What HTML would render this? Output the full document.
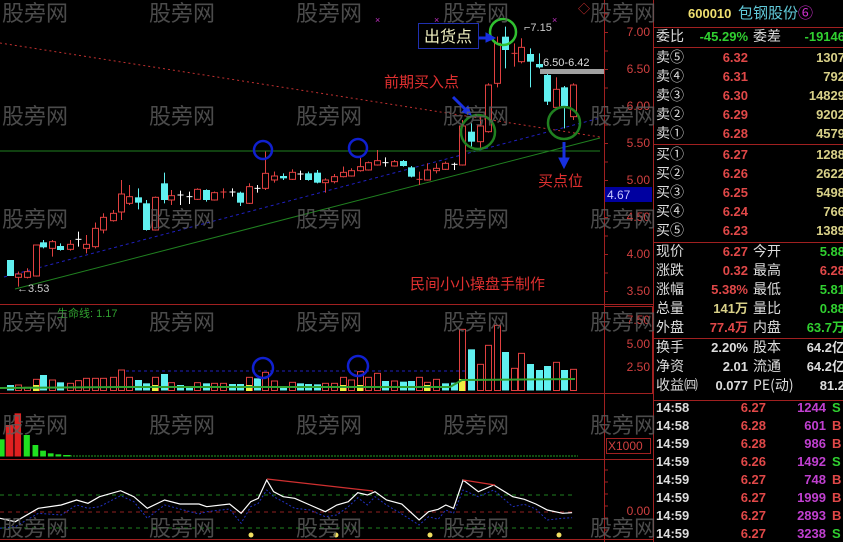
<!DOCTYPE html>
<html><head><meta charset="utf-8">
<style>
html,body{margin:0;padding:0;background:#000;width:843px;height:542px;overflow:hidden}
body{position:relative;font-family:"Liberation Sans","Noto Sans CJK SC",sans-serif}
svg{position:absolute;left:0;top:0}
.p{position:absolute;font-size:13px;line-height:19px;white-space:nowrap}
.l{color:#ddd;font-family:"Noto Sans CJK SC",sans-serif;font-size:14px}
.w{color:#ddd;font-weight:bold}
.m{color:#c040d0;font-weight:bold;text-align:right}
</style></head><body>
<svg id="s" width="843" height="542" xmlns="http://www.w3.org/2000/svg" font-family="Liberation Sans, Noto Sans CJK SC, sans-serif">
<g stroke="#a02020" stroke-width="1" fill="none">
<line x1="0" y1="304.5" x2="653" y2="304.5"/>
<line x1="0" y1="393.5" x2="653" y2="393.5"/>
<line x1="0" y1="459.5" x2="653" y2="459.5"/>
<line x1="0" y1="539.5" x2="653" y2="539.5"/>
<line x1="604.5" y1="0" x2="604.5" y2="542"/>
<line x1="653.5" y1="0" x2="653.5" y2="542"/>
<rect x="604.5" y="306.5" width="48" height="87"/>
<line x1="653" y1="27.5" x2="843" y2="27.5"/>
<line x1="653" y1="47.5" x2="843" y2="47.5"/>
<line x1="653" y1="144.5" x2="843" y2="144.5"/>
<line x1="653" y1="242.5" x2="843" y2="242.5"/>
<line x1="653" y1="338.5" x2="843" y2="338.5"/>
<line x1="653" y1="400.5" x2="843" y2="400.5"/>
</g>
<g id="ticks" stroke="#a02020"></g>
<g fill="#d04040" font-size="12" text-anchor="end">
<text x="650" y="36">7.00</text><text x="650" y="73">6.50</text><text x="650" y="110">6.00</text>
<text x="650" y="147">5.50</text><text x="650" y="184">5.00</text><text x="650" y="221">4.50</text>
<text x="650" y="258">4.00</text><text x="650" y="295">3.50</text>
<text x="650" y="324">7.50</text><text x="650" y="348">5.00</text><text x="650" y="371">2.50</text>
<text x="650" y="515">0.00</text>
</g>
<rect x="605" y="187" width="47" height="15" fill="#0000a0"/>
<text x="607" y="199" fill="#c8c8ff" font-size="12">4.67</text>
<rect x="606.5" y="438.5" width="44" height="15" fill="none" stroke="#a02020"/>
<text x="608" y="450" fill="#d04040" font-size="12">X1000</text>
<line x1="0" y1="43" x2="600" y2="137" stroke="#c03030" stroke-dasharray="2,3"/>
<line x1="4" y1="277" x2="600" y2="118" stroke="#2020c0" stroke-dasharray="3,3"/>
<line x1="15" y1="289" x2="600" y2="138" stroke="#208020"/>
<line x1="0" y1="151" x2="600" y2="151" stroke="#208020"/>
<line x1="126" y1="371" x2="465" y2="371" stroke="#2020c0" stroke-dasharray="3,3"/>
<g id="c"></g>
<g id="v"></g>
<polyline points="0,388 120,387 450,387 462,380 575,379" fill="none" stroke="#30a030" stroke-width="2"/>
<g id="b"></g>
<line x1="70" y1="456" x2="578" y2="456" stroke="#20a020" stroke-dasharray="2,1"/>
<g stroke-dasharray="4,4" stroke-width="1">
<line x1="0" y1="495" x2="576" y2="495" stroke="#208020"/>
<line x1="0" y1="528" x2="576" y2="528" stroke="#208020"/>
<line x1="0" y1="512" x2="576" y2="512" stroke="#902020"/>
</g>
<polyline id="bl" fill="none" stroke="#2030c0" stroke-dasharray="2,2"/>
<polyline id="wl" fill="none" stroke="#fff" stroke-width="1.2"/>
<line x1="267" y1="479" x2="373" y2="491" stroke="#d03030" stroke-width="1.2"/>
<line x1="463" y1="480" x2="495" y2="485" stroke="#d03030" stroke-width="1.2"/>
<g fill="#f0e060"><circle cx="251" cy="535" r="2.5"/><circle cx="336" cy="535" r="2.5"/><circle cx="430" cy="535" r="2.5"/><circle cx="559" cy="535" r="2.5"/></g>
<g fill="none" stroke-width="2.5">
<circle cx="263" cy="150" r="9" stroke="#1020d0"/>
<circle cx="358" cy="148" r="9" stroke="#1020d0"/>
<circle cx="263" cy="368" r="10" stroke="#1020d0"/>
<circle cx="358" cy="366" r="10" stroke="#1020d0"/>
<circle cx="503" cy="32" r="13" stroke="#30c030"/>
<circle cx="478" cy="132" r="17" stroke="#208020"/>
<circle cx="564" cy="123" r="16" stroke="#208020"/>
</g>
<rect x="418.5" y="23.5" width="60" height="25" fill="#000" stroke="#2030b0"/>
<text x="424" y="42" fill="#f0f0c0" font-size="16" font-family="Noto Sans CJK SC">出货点</text>
<g stroke="#1830e0" stroke-width="3" fill="#1830e0">
<line x1="479" y1="38" x2="488" y2="38"/><polygon points="486,33 495,38 486,42" stroke-width="1"/>
<line x1="453" y1="97" x2="466" y2="110"/><polygon points="462,112 471,115 468,106" stroke-width="1"/>
<line x1="564" y1="142" x2="564" y2="160"/><polygon points="559,158 564,168 569,158" stroke-width="1"/>
</g>
<text x="384" y="87" fill="#e03030" font-size="15" font-family="Noto Sans CJK SC">前期买入点</text>
<text x="538" y="186" fill="#e03030" font-size="15" font-family="Noto Sans CJK SC">买点位</text>
<text x="410" y="289" fill="#e03030" font-size="15" font-family="Noto Sans CJK SC">民间小小操盘手制作</text>
<text x="57" y="317" fill="#30a030" font-size="11">生命线: 1.17</text>
<text x="17" y="292" fill="#ccc" font-size="11">←3.53</text>
<text x="524" y="31" fill="#ccc" font-size="11">⌐7.15</text>
<text x="543" y="66" fill="#ddd" font-size="11">6.50-6.42</text>
<rect x="540" y="69" width="64" height="5" fill="#a0a0a0"/>
<g fill="#c030c0" font-size="9"><text x="375" y="23">×</text><text x="434" y="23">×</text><text x="552" y="23">×</text></g>
<text x="578" y="13" fill="#d03030" font-size="12">◇</text>
<g id="wm" fill="#5e5e5e" fill-opacity="0.8" font-size="22" font-family="Noto Sans CJK SC"></g>
</svg>

<div class="p" style="left:688px;top:4px;color:#f0e070;font-weight:bold">600010</div>
<div class="p" style="left:738px;top:3px;color:#60c8d8;font-size:15px;font-family:'Noto Sans CJK SC'">包钢股份<span style="color:#d030d0">⑥</span></div>

<div id="rp"></div>

<script>
var s=document.getElementById('s'),NS='http://www.w3.org/2000/svg';
function el(p,t,a){var e=document.createElementNS(NS,t);for(var k in a)e.setAttribute(k,a[k]);p.appendChild(e);return e;}
var C=document.getElementById('c');
var K=[[25,780,828,780,828,'c'],[48,822,832,815,860,'r'],[70,815,832,805,835,'r'],[93,735,828,735,830,'r'],[113,727,742,720,745,'c'],[137,725,745,720,770,'r'],[158,738,750,730,752,'c'],[182,733,748,720,752,'r'],[203,718,720,695,740,'w'],[225,733,745,705,760,'r'],[247,685,740,668,745,'r'],[270,652,690,640,700,'r'],[294,640,662,630,665,'r'],[315,582,636,540,660,'r'],[338,590,610,555,615,'r'],[360,592,608,565,628,'c'],[382,610,690,600,692,'c'],[405,592,690,590,692,'r'],[428,550,600,518,610,'c'],[448,587,600,570,615,'r'],[470,585,590,572,615,'w'],[493,590,592,575,612,'w'],[516,568,598,565,600,'r'],[537,570,600,568,605,'c'],[560,578,600,575,602,'r'],[583,576,578,565,595,'r'],[605,576,578,565,590,'w'],[628,578,608,575,618,'c'],[650,560,610,550,612,'r'],[672,565,567,555,578,'w'],[693,520,565,455,570,'r'],[717,528,540,515,548,'r'],[740,528,535,520,540,'c'],[762,517,538,508,540,'r'],[783,522,526,512,540,'w'],[805,520,540,515,542,'c'],[828,518,548,510,550,'c'],[850,540,548,535,578,'r'],[872,530,545,522,550,'r'],[895,517,530,500,532,'r'],[918,512,528,505,530,'r'],[940,500,512,470,515,'r'],[962,488,510,485,512,'r'],[985,482,495,450,497,'r'],[1007,488,490,472,500,'w'],[1030,485,498,480,500,'r'],[1053,483,498,480,500,'c'],[1073,502,530,498,532,'c'],[1095,538,542,515,555,'r'],[1117,510,540,490,542,'r'],[1140,505,512,490,520,'r'],[1162,490,508,485,510,'r'],[1185,493,495,488,510,'w'],[1208,378,495,360,497,'r'],[1230,395,425,370,445,'c'],[1253,378,425,350,445,'r'],[1275,255,395,250,398,'r'],[1298,130,250,110,262,'r'],[1320,110,150,80,205,'c'],[1342,160,165,130,200,'r'],[1362,142,185,115,190,'r'],[1385,162,185,145,262,'c'],[1408,192,202,160,205,'c'],[1430,225,305,222,315,'c'],[1452,268,322,232,325,'r'],[1475,262,318,258,385,'c'],[1498,255,350,250,360,'r']];
var col={r:'#e04040',c:'#60f0f0',w:'#ffffff'};
K.forEach(function(k){var x=Math.round(k[0]/2.613)+0.5,t=k[1]/3,b=k[2]/3,h=k[3]/3,l=k[4]/3,c=col[k[5]];
el(C,'line',{x1:x,y1:h,x2:x,y2:l,stroke:c});
if(b-t<2){el(C,'line',{x1:x-3,y1:t,x2:x+3,y2:t,stroke:c});}
else if(k[5]=='r'){el(C,'line',{x1:x,y1:h,x2:x,y2:t,stroke:c});el(C,'rect',{x:x-3,y:t,width:6,height:b-t,fill:'#000',stroke:c});}
else el(C,'rect',{x:x-3.5,y:t,width:7,height:b-t,fill:c});});
var V=[255,'c',255,'r',262,'r',238,'r',225,'c',240,'r',247,'c',250,'r',242,'r',235,'r',235,'r',235,'r',232,'r',210,'r',232,'r',240,'c',250,'c',232,'r',222,'c',248,'r',255,'c',258,'c',248,'r',250,'c',250,'r',250,'r',252,'c',252,'c',232,'r',235,'c',217,'r',243,'r',258,'c',247,'r',250,'c',252,'c',253,'c',250,'r',250,'r',232,'r',240,'r',215,'r',232,'r',220,'r',243,'c',243,'r',245,'c',243,'c',232,'r',247,'r',238,'r',250,'c',248,'c',88,'r',148,'c',193,'r',136,'r',76,'r',156,'c',205,'r',160,'r',192,'c',210,'c',198,'c',187,'r',210,'c',208,'r'];
var Vg=document.getElementById('v');
for(var i=0;i<K.length;i++){var x=Math.round(K[i][0]/2.613)+0.5,t=300+V[i*2]/3,b=390.5,c=V[i*2+1];
if(c=='r')el(Vg,'rect',{x:x-3,y:t,width:6,height:b-t,fill:'none',stroke:'#e04040'});else el(Vg,'rect',{x:x-3.5,y:t,width:7,height:b-t,fill:'#60f0f0'});}
[[93],[405],[650],[895],[940],[1117],[1208]].forEach(function(a){var x=Math.round(a[0]/2.613);el(Vg,'rect',{x:x-3,y:a[0]==1208?379:385,width:6,height:a[0]==1208?12:6,fill:'#f0f040'});});
var B=document.getElementById('b');
[[0,12,418,'#20e020'],[15,35,375,'#e02020'],[38,55,340,'#e02020'],[62,78,405,'#20e020'],[85,100,435,'#20e020'],[105,120,452,'#20e020'],[125,140,460,'#20e020'],[145,160,463,'#20e020'],[165,185,465,'#20e020']].forEach(function(a){var x1=a[0]/2.613,x2=a[1]/2.613,t=300+a[2]/3;el(B,'rect',{x:x1,y:t,width:x2-x1,height:456.5-t,fill:a[3]});});
var W=[[0,655],[40,665],[100,625],[160,615],[200,600],[230,610],[260,590],[315,572],[350,590],[385,625],[430,600],[470,612],[520,612],[540,620],[600,612],[630,640],[655,605],[675,595],[697,540],[715,575],[740,590],[770,595],[810,615],[850,635],[880,615],[910,605],[935,578],[960,585],[980,575],[1010,600],[1050,612],[1095,660],[1120,635],[1145,628],[1165,615],[1185,625],[1210,540],[1250,575],[1290,555],[1340,590],[1370,598],[1400,612],[1430,630],[1470,640],[1495,638]];
document.getElementById('wl').setAttribute('points',W.map(function(p){return (p[0]/2.613).toFixed(1)+','+(300+p[1]/3).toFixed(1)}).join(' '));
document.getElementById('bl').setAttribute('points',W.map(function(p,i){return (p[0]/2.613).toFixed(1)+','+(300+p[1]/3+(i%3==0?10:5)).toFixed(1)}).join(' '));
var T=document.getElementById('ticks');
for(var y=14;y<300;y+=18.5)el(T,'line',{x1:604,y1:y,x2:608,y2:y});
for(var y=470;y<540;y+=12)el(T,'line',{x1:604,y1:y,x2:608,y2:y});
var WM=document.getElementById('wm');
[2,149,296,443,590].forEach(function(x){[21,124,227,330,433,536].forEach(function(y){var t=el(WM,'text',{x:x,y:y});t.textContent='股旁网';});});
var rows=[
['委比','-45.29%','委差','-19146',37,'g','g'],
['卖⑤','6.32','','1307',58,'r','y'],['卖④','6.31','','792',77,'r','y'],['卖③','6.30','','14829',96,'r','y'],['卖②','6.29','','9202',115,'r','y'],['卖①','6.28','','4579',134,'r','y'],
['买①','6.27','','1288',155,'r','y'],['买②','6.26','','2622',174,'r','y'],['买③','6.25','','5498',193,'r','y'],['买④','6.24','','766',212,'r','y'],['买⑤','6.23','','1389',231,'r','y'],
['现价','6.27','今开','5.88',252,'r','g'],['涨跌','0.32','最高','6.28',271,'r','r'],['涨幅','5.38%','最低','5.81',290,'r','g'],['总量','141万','量比','0.88',309,'y','g'],['外盘','77.4万','内盘','63.7万',328,'r','g'],
['换手','2.20%','股本','64.2亿',348,'w','w'],['净资','2.01','流通','64.2亿',367,'w','w'],['收益㈣','0.077','PE(动)','81.2',386,'w','w']];
var h='';
rows.forEach(function(r){var yy=r[4]-10;
h+='<div class="p l" style="left:656px;top:'+yy+'px">'+r[0]+'</div>';
var c1=r[5]=='r'?'#e04848':r[5]=='g'?'#30d030':r[5]=='y'?'#d8d088':'#ddd';
var c2=r[6]=='r'?'#e04848':r[6]=='g'?'#30d030':r[6]=='y'?'#d8d088':'#ddd';
h+='<div class="p" style="left:680px;width:68px;text-align:right;top:'+yy+'px;color:'+c1+';font-weight:bold">'+r[1]+'</div>';
if(r[2])h+='<div class="p l" style="left:753px;top:'+yy+'px">'+r[2]+'</div>';
h+='<div class="p" style="left:773px;width:72px;text-align:right;top:'+yy+'px;color:'+c2+';font-weight:bold">'+r[3]+'</div>';});
var tk=[['14:58','6.27','1244','S'],['14:58','6.28','601','B'],['14:59','6.28','986','B'],['14:59','6.26','1492','S'],['14:59','6.27','748','B'],['14:59','6.27','1999','B'],['14:59','6.27','2893','B'],['14:59','6.27','3238','S']];
tk.forEach(function(t,i){var yy=398+i*18;
h+='<div class="p w" style="left:656px;top:'+yy+'px">'+t[0]+'</div>';
h+='<div class="p" style="left:700px;width:66px;text-align:right;top:'+yy+'px;color:#e04848;font-weight:bold">'+t[1]+'</div>';
h+='<div class="p m" style="left:770px;width:56px;top:'+yy+'px">'+t[2]+'</div>';
h+='<div class="p" style="left:832px;top:'+yy+'px;font-weight:bold;color:'+(t[3]=='S'?'#30d030':'#e04848')+'">'+t[3]+'</div>';});
document.getElementById('rp').innerHTML=h;
</script>
</body></html>
